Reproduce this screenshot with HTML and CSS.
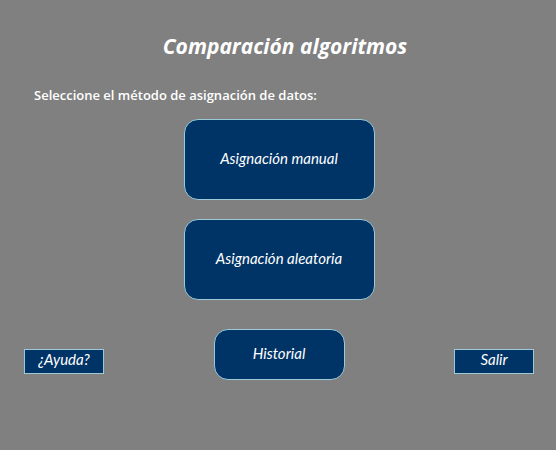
FILE: index.html
```html
<!DOCTYPE html>
<html lang="es">
<head>
<meta charset="utf-8">
<meta name="viewport" content="width=device-width, initial-scale=1">
<title>Comparación algoritmos</title>
<link rel="stylesheet" href="styles.css">
</head>
<body>
<main class="screen">
  <h1 class="title">Comparación algoritmos</h1>
  <h2 class="prompt">Seleccione el método de asignación de datos:</h2>
  <div class="methods">
    <button class="btn btn-method" type="button">Asignación manual</button>
    <button class="btn btn-method" type="button">Asignación aleatoria</button>
  </div>
  <div class="actions">
    <button class="btn btn-small" type="button">¿Ayuda?</button>
    <button class="btn btn-history" type="button">Historial</button>
    <button class="btn btn-small" type="button">Salir</button>
  </div>
</main>
</body>
</html>
```

FILE: styles.css
```css
* {
  box-sizing: border-box;
}

body {
  margin: 0;
  background: #808080;
  color: #fff;
  font-family: "Open Sans", "Noto Sans", sans-serif;
}

.screen {
  padding: 31px 22px 30px 24px;
}

.title {
  margin: 0;
  padding-left: 12px;
  font-size: 21px;
  line-height: 30px;
  font-style: italic;
  font-weight: 700;
  text-align: center;
}

.prompt {
  margin: 24px 0 14px;
  padding-left: 10px;
  font-size: 13px;
  line-height: 20px;
  font-weight: 600;
}

.methods {
  display: flex;
  flex-direction: column;
  align-items: center;
  gap: 19px;
}

.actions {
  display: flex;
  justify-content: space-between;
  align-items: center;
  padding-top: 29px;
}

.btn {
  padding: 0 8px 4px;
  border: 1px solid #9bcbd9;
  background: #003366;
  color: #fff;
  font-family: Gabriola, Lato, sans-serif;
  font-size: 15px;
  font-style: italic;
  line-height: 18px;
  cursor: pointer;
}

.btn-method {
  width: 191px;
  height: 81px;
  border-radius: 14px;
}

.btn-history {
  width: 131px;
  height: 51px;
  border-radius: 14px;
}

.btn-small {
  width: 80px;
  height: 25px;
  margin-top: 13px;
}
```
